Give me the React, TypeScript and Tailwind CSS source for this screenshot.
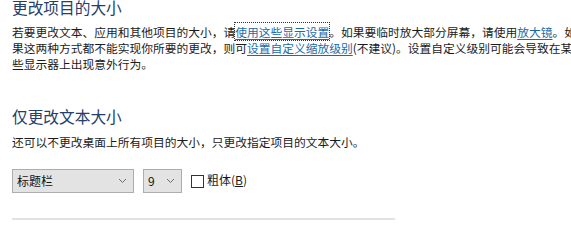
const cjk = { fontFamily: '"Noto Sans CJK SC", "Microsoft YaHei", sans-serif' };

function Chevron() {
  return (
    <svg width="9" height="6" viewBox="0 0 9 6" className="shrink-0">
      <path d="M1 1 L4.5 4.5 L8 1" fill="none" stroke="#6b6b6b" strokeWidth="1" />
    </svg>
  );
}

function FakeSelect({ value, width }: { value: string; width: string }) {
  return (
    <div
      className={`${width} h-[24px] flex items-center justify-between pl-[4px] pr-[6px] bg-[#e3e3e3] border border-[#adadad] text-[12px] text-[#111]`}
    >
      <span className="leading-none">{value}</span>
      <Chevron />
    </div>
  );
}

export default function App() {
  return (
    <div className="w-[571px] h-[224px] overflow-hidden bg-white text-[#1b1b1b]" style={cjk}>
      <div className="w-[580px] pl-[12px]">
        <h2 className="text-[15.7px] leading-[18px] text-[#23406b] font-normal -mt-[1px]">
          更改项目的大小
        </h2>

        <p className="mt-[7px] text-[11.75px] leading-[16px] w-[566px]">
          若要更改文本、应用和其他项目的大小，请
          <a className="text-[#1c6aa8] underline underline-offset-2 outline-1 outline-dotted outline-[#333]">
            使用这些显示设置
          </a>
          。如果要临时放大部分屏幕，请使用
          <a className="text-[#1c6aa8] underline underline-offset-2">放大镜</a>
          。如果这两种方式都不能实现你所要的更改，则可
          <a className="text-[#1c6aa8] underline underline-offset-2">设置自定义缩放级别</a>
          (不建议)。设置自定义级别可能会导致在某些显示器上出现意外行为。
        </p>

        <h2 className="mt-[36px] text-[15.7px] leading-[18px] text-[#23406b] font-normal">
          仅更改文本大小
        </h2>

        <p className="mt-[8px] text-[11.75px] leading-[16px]">
          还可以不更改桌面上所有项目的大小，只更改指定项目的文本大小。
        </p>

        <div className="mt-[19px] flex items-center">
          <FakeSelect value="标题栏" width="w-[122px]" />
          <div className="ml-[9px]">
            <FakeSelect value="9" width="w-[39px]" />
          </div>
          <label className="ml-[9px] flex items-center text-[12px] leading-none">
            <span className="w-[13px] h-[13px] border border-[#333] bg-white" />
            <span className="ml-[3px] -mt-[3px]">
              粗体(<span className="underline">B</span>)
            </span>
          </label>
        </div>

        <div className="mt-[25px] w-[383px] h-[2px] bg-[#e2e2e2]" />
      </div>
    </div>
  );
}
